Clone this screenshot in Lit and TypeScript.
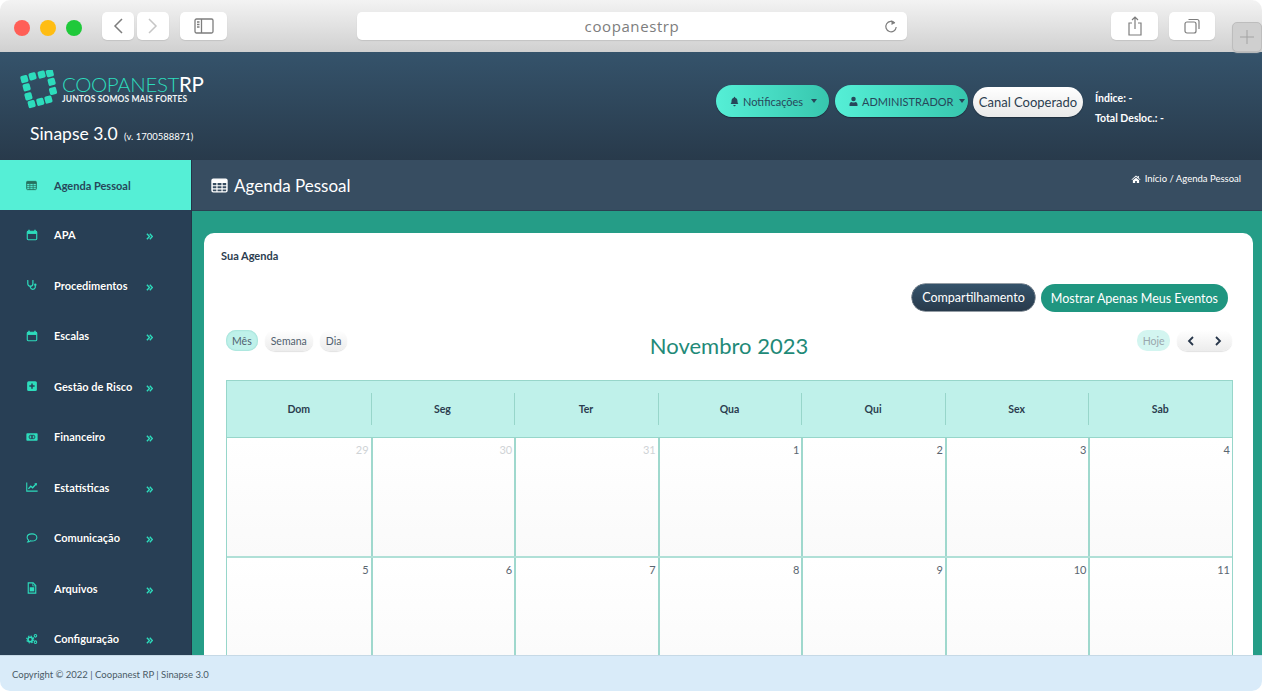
import { LitElement, html, css, svg } from 'lit';
import { customElement } from 'lit/decorators.js';

const icons: Record<string, unknown> = {
  table: svg`<rect x="1" y="2" width="14" height="12" rx="1.2" fill="none" stroke="currentColor" stroke-width="1.4"/><path d="M1 5.2h14M1 8.2h14M1 11.2h14M5.6 5v9M10.4 5v9" stroke="currentColor" stroke-width="1.1" fill="none"/><rect x="1" y="2" width="14" height="3.4" fill="currentColor"/>`,
  calendar: svg`<path d="M4 1v3M12 1v3" stroke="currentColor" stroke-width="2"/><rect x="1.7" y="3" width="12.6" height="11.3" rx="1.2" fill="none" stroke="currentColor" stroke-width="1.5"/><rect x="1.7" y="3" width="12.6" height="3.6" fill="currentColor"/>`,
  stethoscope: svg`<path d="M3 2H2.4v4.2a3.4 3.4 0 0 0 6.8 0V2h-.6M5.8 9.6v1.6a3.4 3.4 0 0 0 6.6 0V9" fill="none" stroke="currentColor" stroke-width="1.6"/><circle cx="12.4" cy="7.6" r="1.6" fill="currentColor"/>`,
  plus: svg`<rect x="1.5" y="1.5" width="13" height="13" rx="2" fill="currentColor"/><path d="M8 4.5v7M4.5 8h7" stroke="#283f55" stroke-width="2"/>`,
  money: svg`<rect x="0.5" y="3" width="15" height="10" rx="1" fill="currentColor"/><circle cx="6.6" cy="8" r="2.5" fill="none" stroke="#283f55" stroke-width="1.2"/><circle cx="9.4" cy="8" r="2.5" fill="none" stroke="#283f55" stroke-width="1.2"/>`,
  chart: svg`<path d="M1 2v11.5h14.5" fill="none" stroke="currentColor" stroke-width="1.4"/><path d="M3.2 10.5 6.4 7l2.4 2 4.6-5" fill="none" stroke="currentColor" stroke-width="1.8"/><path d="m11 3.4 3.6-.6-.4 3.6z" fill="currentColor"/>`,
  comment: svg`<path d="M8 2.5c3.7 0 6.5 2 6.5 4.7S11.7 12 8 12c-.8 0-1.5-.1-2.200-.3-.9.8-2 1.400-3.400 1.500.6-.7 1-1.500 1.100-2.400C2.300 9.900 1.500 8.600 1.500 7.200 1.500 4.500 4.300 2.500 8 2.500z" fill="none" stroke="currentColor" stroke-width="1.4"/>`,
  file: svg`<path d="M3 1.200h6.500L13 4.700v10.100H3z" fill="none" stroke="currentColor" stroke-width="1.500"/><rect x="5" y="7" width="6" height="5.500" fill="currentColor"/><path d="M9 1.500v3.700h3.700" fill="none" stroke="currentColor"/>`,
  cogs: svg`<circle cx="5.600" cy="8.600" r="3" fill="none" stroke="currentColor" stroke-width="2.200"/><circle cx="5.600" cy="8.600" r="4.700" fill="none" stroke="currentColor" stroke-width="1.400" stroke-dasharray="2 1.700"/><circle cx="12.600" cy="3.800" r="1.700" fill="none" stroke="currentColor" stroke-width="1.400"/><circle cx="12.600" cy="12.200" r="1.700" fill="none" stroke="currentColor" stroke-width="1.400"/>`,
  bell: svg`<path d="M8 1c.6 0 1 .4 1 1v.5c2 .5 3.300 2.200 3.300 4.300 0 3 .7 4 1.700 5H2c1-1 1.700-2 1.700-5 0-2.100 1.300-3.800 3.300-4.300V2c0-.6.4-1 1-1zM6.300 13h3.400c0 1-.8 1.800-1.700 1.800S6.300 14 6.300 13z" fill="currentColor"/>`,
  user: svg`<circle cx="8" cy="4.500" r="3.300" fill="currentColor"/><path d="M2.200 14.500v-2.300C2.200 9.800 4 8.600 5.500 8.600c.7.500 1.600.8 2.500.8s1.800-.3 2.500-.8c1.500 0 3.300 1.200 3.300 3.600v2.300z" fill="currentColor"/>`,
  home: svg`<path d="M8 2.500.8 8.600l.8.900L8 4.200l6.400 5.300.8-.9-2.700-2.300V3h-1.800v1.800zM3 10v4.500h3.700v-3.200h2.600v3.200H13V10L8 5.800z" fill="currentColor"/>`,
};

const icon = (name: string) => html`<svg class="ico" viewBox="0 0 16 16">${icons[name]}</svg>`;

const menu = [
  ['calendar', 'APA'],
  ['stethoscope', 'Procedimentos'],
  ['calendar', 'Escalas'],
  ['plus', 'Gestão de Risco'],
  ['money', 'Financeiro'],
  ['chart', 'Estatísticas'],
  ['comment', 'Comunicação'],
  ['file', 'Arquivos'],
  ['cogs', 'Configuração'],
];

const days = ['Dom', 'Seg', 'Ter', 'Qua', 'Qui', 'Sex', 'Sab'];
const weeks = [
  [['29', 1], ['30', 1], ['31', 1], ['1', 0], ['2', 0], ['3', 0], ['4', 0]],
  [['5', 0], ['6', 0], ['7', 0], ['8', 0], ['9', 0], ['10', 0], ['11', 0]],
];

// squares of the logo ring, centre x, centre y in the 40x40 box
const logoDots = [
  [5, 8], [14, 5], [24, 3], [33, 1.500],
  [7.500, 17], [35, 11], [9.500, 27], [36.500, 21],
  [13, 35.500], [22.500, 33], [31.500, 30.500],
];

@customElement('app-root')
export class AppRoot extends LitElement {
  static styles = css`
    :host {
      display: block;
      width: 100%;
      height: 691px;
      overflow: hidden;
      background: #fff;
      font-family: Lato, "Open Sans", sans-serif;
    }
    .window {
      height: 691px;
      display: flex;
      flex-direction: column;
      border-radius: 10px;
      overflow: hidden;
    }
    .ico {
      width: 1em;
      height: 1em;
      flex: none;
      display: block;
    }

    /* browser chrome */
    .chrome {
      height: 52px;
      flex: none;
      box-sizing: border-box;
      display: flex;
      align-items: flex-start;
      padding: 12px 0 0 14px;
      background: linear-gradient(#f3f3f3, #d0d0d0);
      position: relative;
    }
    .lights {
      display: flex;
      gap: 10px;
      margin-top: 8px;
      width: 88px;
    }
    .lights i {
      width: 16px;
      height: 16px;
      border-radius: 50%;
    }
    .tool {
      height: 28px;
      box-sizing: border-box;
      background: #fff;
      border-radius: 5px;
      box-shadow: 0 1px 1px #c4c4c4;
      display: flex;
      align-items: center;
      justify-content: center;
      color: #7d7d7d;
    }
    .tool svg {
      fill: none;
      stroke: currentColor;
    }
    .url {
      width: 550px;
      margin: 0 204px 0 130px;
      font-size: 15px;
      letter-spacing: 0.6px;
      color: #7d7d7d;
      font-family: "Open Sans", sans-serif;
      position: relative;
    }
    .url svg {
      position: absolute;
      right: 9px;
      top: 7px;
    }
    .newtab {
      position: absolute;
      right: 0;
      bottom: 0;
      width: 30px;
      height: 30px;
      box-sizing: border-box;
      background: #cfcfcf;
      border: 1px solid #bdbdbd;
      color: #a3a3a3;
    }

    /* app header */
    .top {
      height: 108px;
      flex: none;
      box-sizing: border-box;
      display: flex;
      background: linear-gradient(#35536b, #283a4b);
      color: #fff;
    }
    .brand {
      width: 716px;
      flex: none;
      box-sizing: border-box;
      padding: 18px 0 0 18px;
    }
    .logo {
      display: flex;
      gap: 4px;
    }
    .logo svg {
      width: 40px;
      height: 40px;
      flex: none;
    }
    .logo-name {
      font-size: 20.500px;
      line-height: 22px;
      font-weight: 300;
      color: #2ddcbc;
      letter-spacing: -0.4px;
      margin-top: 3px;
    }
    .logo-name b {
      color: #fff;
      font-weight: 400;
    }
    .logo-tag {
      font-size: 8.500px;
      font-weight: 700;
      line-height: 9px;
      color: #eef3f5;
      letter-spacing: 0.1px;
    }
    .version {
      margin: 11px 0 0 12px;
      font-size: 17.500px;
      line-height: 26px;
    }
    .version small {
      font-size: 9.500px;
      margin-left: 2px;
    }
    .actions {
      display: flex;
      align-items: flex-start;
      gap: 6px;
      padding-top: 33px;
    }
    .pill {
      height: 32px;
      box-sizing: border-box;
      border-radius: 16px;
      display: flex;
      align-items: center;
      font-size: 11px;
      color: #27475a;
      background: linear-gradient(90deg, #55efd6, #37c6ae);
      box-shadow: 0 1px 1px #1e2e3d;
    }
    .pill .ico {
      font-size: 11px;
    }
    .caret {
      width: 0;
      height: 0;
      border: 3.500px solid transparent;
      border-top: 4px solid #27475a;
      border-bottom: 0;
    }
    .notif {
      width: 113px;
      padding: 0 12px 0 13px;
      gap: 3px;
    }
    .notif .caret {
      margin-left: auto;
    }
    .admin {
      width: 133px;
      padding: 0 13px;
      gap: 3px;
    }
    .admin .caret {
      margin-left: 3px;
    }
    .canal {
      width: 110px;
      height: 30px;
      margin: 2px 0 0 -1px;
      justify-content: center;
      background: linear-gradient(#fff, #e9e9e9);
      font-size: 13px;
      color: #2b3d4f;
    }
    .info {
      margin-left: 6px;
      padding-top: 3px;
      font-size: 10.500px;
      font-weight: 700;
      line-height: 20px;
    }

    /* body */
    .body {
      flex: 1;
      min-height: 0;
      display: grid;
      grid-template-columns: 192px 1fr;
    }
    .side {
      background: #283f55;
      border-right: 1px solid #233548;
      box-sizing: border-box;
      overflow: hidden;
    }
    .item {
      height: 50.500px;
      box-sizing: border-box;
      display: flex;
      align-items: center;
      padding: 0 38px 1px 26px;
      font-size: 11px;
      font-weight: 700;
      color: #fff;
      text-shadow: 0 0 1px #10202e;
    }
    .item .ico {
      font-size: 12px;
      color: #2ddcbc;
      margin-right: 16px;
    }
    .item .label {
      flex: 1;
    }
    .item .more {
      width: 7px;
      height: 7px;
      margin-top: 4px;
      fill: none;
      stroke: #2ddcbc;
      stroke-width: 1.600;
    }
    .item.active {
      height: 50px;
      background: #55efd6;
      color: #27475a;
      text-shadow: none;
      padding-bottom: 0;
    }
    .item.active .ico {
      color: #27715f;
      font-size: 11px;
      margin-right: 17px;
    }

    .main {
      min-width: 0;
      display: flex;
      flex-direction: column;
      background: #259d87;
    }
    .crumbbar {
      height: 50px;
      flex: none;
      box-sizing: border-box;
      display: flex;
      justify-content: space-between;
      padding: 0 21px 0 19px;
      background: #374d61;
      color: #fff;
      box-shadow: 0 1px 0 #2b4052;
    }
    .crumbbar h1 {
      margin: 0;
      display: flex;
      align-items: center;
      gap: 6px;
      font-size: 17px;
      font-weight: 400;
    }
    .crumbbar h1 .ico {
      font-size: 17px;
    }
    .crumbs {
      display: flex;
      align-items: center;
      gap: 4px;
      height: 37px;
      font-size: 9.500px;
    }
    .crumbs .ico {
      font-size: 10px;
    }

    .card {
      flex: 1;
      margin: 23px 9px 0 12px;
      box-sizing: border-box;
      background: #fff;
      border-radius: 10px 10px 0 0;
      padding: 16px 21px 0 22px;
      overflow: hidden;
    }
    .card h2 {
      margin: 0 0 0 -5px;
      font-size: 11px;
      line-height: 13px;
      font-weight: 700;
      color: #2b3d4f;
    }
    .card-actions {
      display: flex;
      justify-content: flex-end;
      gap: 6px;
      margin: 22px 4px 0 0;
      height: 28px;
    }
    .btn {
      border-radius: 14px;
      display: flex;
      align-items: center;
      padding: 0 10px;
      font-size: 12.500px;
      color: #fff;
    }
    .btn.dark {
      background: linear-gradient(#35536b, #283a4b);
      height: 27px;
      box-shadow: 0 0 0 0.500px #283a4b;
    }
    .btn.green {
      background: #1f9680;
    }
    .toolbar {
      display: flex;
      justify-content: space-between;
      align-items: flex-start;
      margin-top: 18px;
      height: 50px;
    }
    .group {
      display: flex;
      gap: 7px;
      width: 200px;
    }
    .group.right {
      justify-content: flex-end;
    }
    .chip {
      height: 21px;
      border-radius: 10px;
      padding: 0 6px;
      display: flex;
      align-items: center;
      font-size: 10.500px;
      color: #50606e;
      background: linear-gradient(#fff, #ececec);
      box-shadow: 0 1px 1px #e2e2e2;
    }
    .chip.on {
      background: #bff1ea;
      box-shadow: inset 0 0 2px #7fcfc3;
    }
    .chip.off {
      background: #d3f5f0;
      color: #9aa7ad;
      box-shadow: none;
      padding: 0 5.500px;
    }
    .chip.nav {
      width: 55px;
      padding: 0;
      justify-content: space-around;
      color: #27364a;
    }
    .chip.nav svg {
      width: 8px;
      height: 10px;
      fill: none;
      stroke: currentColor;
      stroke-width: 1.800;
    }
    .month {
      font-size: 22px;
      line-height: 32px;
      color: #1f8a78;
    }
    .cal {
      border: 1px solid #97d6ca;
      border-width: 1px 1px 0 1px;
      width: 1007px;
      box-sizing: border-box;
    }
    .row {
      display: grid;
      grid-template-columns: repeat(7, 1fr);
    }
    .row.head {
      height: 56px;
      background: #bff1ea;
      border-bottom: 1px solid #97d6ca;
    }
    .th {
      display: flex;
      align-items: center;
      justify-content: center;
      font-size: 10.500px;
      font-weight: 700;
      color: #2b3d4f;
      position: relative;
    }
    .th + .th::before {
      content: "";
      position: absolute;
      left: 0;
      top: 12px;
      bottom: 12px;
      width: 1px;
      background: #97d6ca;
    }
    .row.week {
      height: 120px;
      background: linear-gradient(#fff, #fafafa);
      border-bottom: 2px solid #b0e0d7;
      box-sizing: border-box;
    }
    .td {
      text-align: right;
      padding: 4px 2px 0 0;
      font-size: 11px;
      line-height: 16px;
      color: #5a6671;
    }
    .td + .td {
      border-left: 2px solid #9fd8cd;
    }
    .td.muted {
      color: #cfd3d6;
    }

    .foot {
      height: 36px;
      flex: none;
      box-sizing: border-box;
      display: flex;
      align-items: center;
      padding: 2px 0 0 12px;
      background: #d9ebf9;
      border-top: 1px solid #c6d9e6;
      font-size: 9.500px;
      color: #4a5a66;
    }
  `;

  render() {
    return html`
      <div class="window">
        <div class="chrome">
          <div class="lights">
            <i style="background:#ff5f57"></i><i style="background:#ffbd13"></i><i style="background:#1fc93a"></i>
          </div>
          <div class="tool" style="width:32px;margin-right:3px">
            <svg width="12" height="18" viewBox="0 0 12 18" stroke-width="1.500"><path d="M10 2 3 9l7 7"/></svg>
          </div>
          <div class="tool" style="width:32px;margin-right:11px;color:#c6c6c6">
            <svg width="12" height="18" viewBox="0 0 12 18" stroke-width="1.500"><path d="m2 2 7 7-7 7"/></svg>
          </div>
          <div class="tool" style="width:47px">
            <svg width="20" height="16" viewBox="0 0 20 16" stroke-width="1.300"><rect x="1" y="1" width="18" height="14" rx="1.500"/><path d="M7.500 1v14M3 4h2.500M3 6.500h2.500M3 9h2.500"/></svg>
          </div>
          <div class="tool url">
            coopanestrp
            <svg width="14" height="15" viewBox="0 0 14 15" stroke-width="1.200"><path d="M10.800 4A5.200 5.200 0 1 0 12.200 8"/><path d="M7.500 1 11 4l-3.500 2" fill="#7d7d7d" stroke="none"/></svg>
          </div>
          <div class="tool" style="width:47px;margin-right:11px">
            <svg width="16" height="20" viewBox="0 0 16 20" stroke-width="1.200"><path d="M5 7H2v12h12V7h-3M8 13V1M5 4l3-3 3 3"/></svg>
          </div>
          <div class="tool" style="width:46px">
            <svg width="16" height="16" viewBox="0 0 16 16" stroke-width="1.200"><rect x="1" y="4" width="11" height="11" rx="2"/><path d="M4.500 1.500H13a2 2 0 0 1 2 2V11"/></svg>
          </div>
          <div class="newtab tool">
            <svg width="16" height="16" viewBox="0 0 16 16" stroke-width="1"><path d="M8 1v14M1 8h14"/></svg>
          </div>
        </div>

        <div class="top">
          <div class="brand">
            <div class="logo">
              <svg viewBox="-2 -2 44 44">
                ${logoDots.map(
                  ([x, y]) => svg`<rect x=${x - 4} y=${y - 4} width="8" height="8" rx="1.800" fill="#2ddcbc" transform="rotate(-15 ${x} ${y})"/>`,
                )}
              </svg>
              <div>
                <div class="logo-name">COOPANEST<b>RP</b></div>
                <div class="logo-tag">JUNTOS SOMOS MAIS FORTES</div>
              </div>
            </div>
            <div class="version">Sinapse 3.0 <small>(v. 1700588871)</small></div>
          </div>
          <div class="actions">
            <div class="pill notif">${icon('bell')}Notificações<span class="caret"></span></div>
            <div class="pill admin">${icon('user')}ADMINISTRADOR<span class="caret"></span></div>
            <div class="pill canal">Canal Cooperado</div>
            <div class="info">Índice: -<br />Total Desloc.: -</div>
          </div>
        </div>

        <div class="body">
          <nav class="side">
            <div class="item active">${icon('table')}<span class="label">Agenda Pessoal</span></div>
            ${menu.map(
              ([ic, label]) => html`
                <div class="item">
                  ${icon(ic)}<span class="label">${label}</span>
                  <svg class="more" viewBox="0 0 8 8"><path d="m1 .8 3 3.200-3 3.200M4.300.8l3 3.200-3 3.200"/></svg>
                </div>
              `,
            )}
          </nav>

          <div class="main">
            <div class="crumbbar">
              <h1>${icon('table')}Agenda Pessoal</h1>
              <div class="crumbs">${icon('home')}Início / Agenda Pessoal</div>
            </div>
            <div class="card">
              <h2>Sua Agenda</h2>
              <div class="card-actions">
                <div class="btn dark">Compartilhamento</div>
                <div class="btn green">Mostrar Apenas Meus Eventos</div>
              </div>
              <div class="toolbar">
                <div class="group">
                  <div class="chip on">Mês</div>
                  <div class="chip">Semana</div>
                  <div class="chip">Dia</div>
                </div>
                <div class="month">Novembro 2023</div>
                <div class="group right">
                  <div class="chip off">Hoje</div>
                  <div class="chip nav">
                    <svg viewBox="0 0 8 10"><path d="M6 1 2 5l4 4"/></svg>
                    <svg viewBox="0 0 8 10"><path d="m2 1 4 4-4 4"/></svg>
                  </div>
                </div>
              </div>
              <div class="cal">
                <div class="row head">${days.map(d => html`<div class="th">${d}</div>`)}</div>
                ${weeks.map(
                  w => html`
                    <div class="row week">
                      ${w.map(([n, muted]) => html`<div class="td ${muted ? 'muted' : ''}">${n}</div>`)}
                    </div>
                  `,
                )}
              </div>
            </div>
          </div>
        </div>

        <div class="foot">Copyright © 2022 | Coopanest RP | Sinapse 3.0</div>
      </div>
    `;
  }
}

declare global {
  interface HTMLElementTagNameMap {
    'app-root': AppRoot;
  }
}
